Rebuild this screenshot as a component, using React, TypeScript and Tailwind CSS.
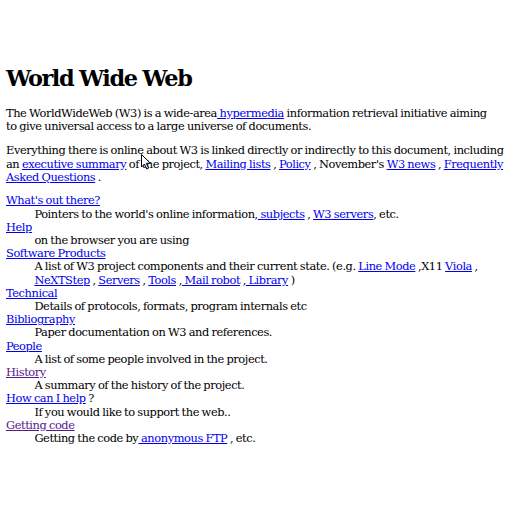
import React from 'react';

function A({ children, visited }: { children: React.ReactNode; visited?: boolean }) {
  return (
    <a href="#" className={visited ? 'text-[#551a8b] underline' : 'text-[#0000ee] underline'}>
      {children}
    </a>
  );
}

const entries: { term: React.ReactNode; desc: React.ReactNode }[] = [
  {
    term: <A>What's out there?</A>,
    desc: <>Pointers to the world's online information,<A> subjects</A> , <A>W3 servers</A>, etc.</>,
  },
  { term: <A>Help</A>, desc: <>on the browser you are using</> },
  {
    term: <A>Software Products</A>,
    desc: (
      <>
        A list of W3 project components and their current state. (e.g. <A>Line Mode</A> ,X11 <A>Viola</A> ,{' '}
        <A>NeXTStep</A> , <A>Servers</A> , <A>Tools</A> ,<A> Mail robot</A> ,<A> Library</A> )
      </>
    ),
  },
  { term: <A>Technical</A>, desc: <>Details of protocols, formats, program internals etc</> },
  { term: <A>Bibliography</A>, desc: <>Paper documentation on W3 and references.</> },
  { term: <A>People</A>, desc: <>A list of some people involved in the project.</> },
  { term: <A visited>History</A>, desc: <>A summary of the history of the project.</> },
  { term: <><A>How can I help</A> ?</>, desc: <>If you would like to support the web..</> },
  { term: <A visited>Getting code</A>, desc: <>Getting the code by<A> anonymous FTP</A> , etc.</> },
];

export default function App() {
  return (
    <div className="relative w-[512px] h-[512px] bg-white text-black px-[6px] font-['DejaVu_Serif',serif] text-[11.4px] leading-[13.2px] tracking-[-0.42px] [word-spacing:-0.6px]">
      <h1 className="pt-[65px] mb-[15.2px] text-[22.4px] leading-[26.4px] font-bold tracking-[-1.4px]">World Wide Web</h1>
      <p className="mb-[11.4px] max-w-[492px]">
        The WorldWideWeb (W3) is a wide-area<A> hypermedia</A> information retrieval initiative aiming to give
        universal access to a large universe of documents.
      </p>
      <p className="mb-[11.4px]">
        Everything there is online about W3 is linked directly or indirectly to this document, including an{' '}
        <A>executive summary</A> of the project, <A>Mailing lists</A> , <A>Policy</A> , November's <A>W3 news</A> ,{' '}
        <A>Frequently Asked Questions</A> .
      </p>
      <dl className="-mt-[1px]">
        {entries.map((e, i) => (
          <React.Fragment key={i}>
            <dt>{e.term}</dt>
            <dd className="ml-[28.4px]">{e.desc}</dd>
          </React.Fragment>
        ))}
      </dl>

      {/* mouse pointer */}
      <svg className="absolute left-[141px] top-[154px]" width="11" height="16" viewBox="0 0 11 16">
        <path d="M0.5 0.5 L0.5 13 L3.5 10 L5.8 15 L7.6 14.2 L5.4 9.3 L9.5 9.3 Z" fill="white" stroke="black" strokeWidth="1" strokeLinejoin="round" />
      </svg>
    </div>
  );
}
